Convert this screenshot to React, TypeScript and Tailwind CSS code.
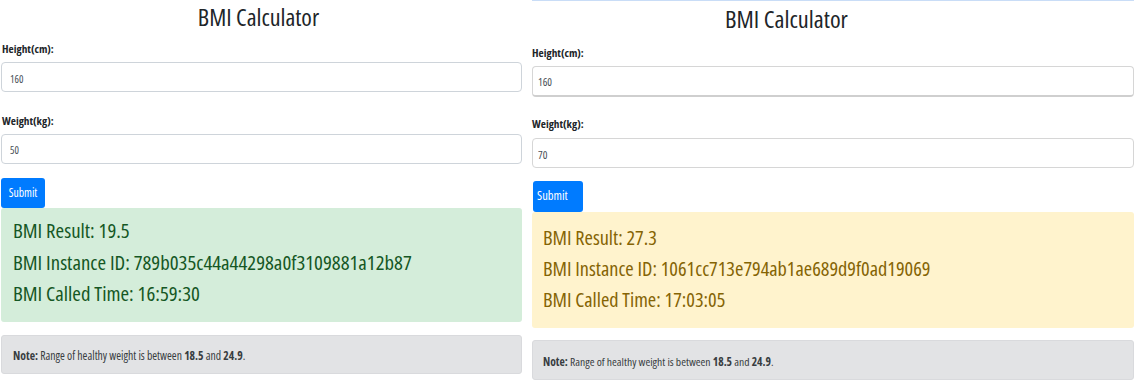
import React from "react";

type Result = { bmi: string; id: string; time: string };

export default function App() {
  const left: Result = {
    bmi: "19.5",
    id: "789b035c44a44298a0f3109881a12b87",
    time: "16:59:30",
  };
  const right: Result = {
    bmi: "27.3",
    id: "1061cc713e794ab1ae689d9f0ad19069",
    time: "17:03:05",
  };

  return (
    <div className="w-[1135px] h-[386px] bg-white overflow-hidden flex font-['Open_Sans',sans-serif] font-stretch-[75%]">
      {/* first run: normal weight */}
      <div className="w-[521px] ml-px flex flex-col shrink-0">
        <h3 className="w-[515px] h-[34px] leading-[34px] text-center text-[24px] text-[#212529]">
          BMI Calculator
        </h3>

        <div className="mt-[8px] h-[14px] leading-[14px] ml-px text-[11.3px] font-bold text-[#212529]">
          Height(cm):
        </div>
        <input
          readOnly
          value="160"
          className="mt-[6px] h-[30px] w-full border border-[#ced4da] rounded-[4px] px-[8px] pt-[3px] text-[10.5px] text-[#495057] outline-none"
        />

        <div className="mt-[22px] h-[14px] leading-[14px] ml-px text-[11.3px] font-bold text-[#212529]">
          Weight(kg):
        </div>
        <input
          readOnly
          value="50"
          className="mt-[6px] h-[30px] w-full border border-[#ced4da] rounded-[4px] px-[8px] pt-[2px] text-[10.5px] text-[#495057] outline-none"
        />

        <button className="mt-[14px] h-[30px] w-[44px] rounded-[3px] bg-[#007bff] text-white text-[11.7px] text-center">
          Submit
        </button>

        <div className="h-[114px] rounded-[3px] bg-[#d4edda] text-[#155724] pt-[7px] pl-[12px] text-[20.8px] leading-[31.5px]">
          <div>BMI Result: {left.bmi}</div>
          <div>BMI Instance ID: {left.id}</div>
          <div>BMI Called Time: {left.time}</div>
        </div>

        <div className="mt-[13px] h-[39px] rounded-[3px] bg-[#e2e3e5] border border-[#d9dadd] flex items-center pl-[11px] pt-[3px] text-[11.7px] text-[#383d41]">
          <span>
            <b>Note:</b> Range of healthy weight is between <b>18.5</b> and <b>24.9</b>.
          </span>
        </div>
      </div>

      {/* second run: overweight */}
      <div className="w-[602px] ml-[10px] flex flex-col shrink-0">
        <div className="h-px bg-[#c9ddf7]" />
        <h3 className="mt-[3.5px] w-[509px] h-[28px] leading-[28px] text-center text-[24.3px] text-[#212529]">
          BMI Calculator
        </h3>

        <div className="mt-[13px] h-[14px] leading-[14px] text-[11.3px] font-bold text-[#212529]">
          Height(cm):
        </div>
        <input
          readOnly
          value="160"
          className="mt-[6.5px] h-[31px] w-full border border-b-2 border-[#d6d6d6] border-b-[#cfcfcf] rounded-[4px] px-[5px] pt-[1px] text-[11px] text-[#495057] outline-none"
        />

        <div className="mt-[20px] h-[14px] leading-[14px] text-[11.3px] font-bold text-[#212529]">
          Weight(kg):
        </div>
        <input
          readOnly
          value="70"
          className="mt-[7px] h-[30px] w-full border border-[#d6d6d6] rounded-[4px] px-[5px] pt-[3px] text-[11px] text-[#495057] outline-none"
        />

        <button className="mt-[13px] ml-px h-[31px] w-[50px] rounded-[3px] bg-[#007bff] text-white text-[12.5px] text-left pl-[4px]">
          Submit
        </button>

        <div className="h-[116px] rounded-[3px] bg-[#fff3cd] text-[#856404] pt-[9.5px] pl-[11px] text-[20.3px] leading-[31px]">
          <div>BMI Result: {right.bmi}</div>
          <div>BMI Instance ID: {right.id}</div>
          <div>BMI Called Time: {right.time}</div>
        </div>

        <div className="mt-[12px] h-[40px] rounded-[3px] bg-[#e2e3e5] border border-[#d9dadd] flex items-center pl-[10px] pt-[4px] text-[11.6px] text-[#383d41]">
          <span>
            <b>Note:</b> Range of healthy weight is between <b>18.5</b> and <b>24.9</b>.
          </span>
        </div>
      </div>
    </div>
  );
}
